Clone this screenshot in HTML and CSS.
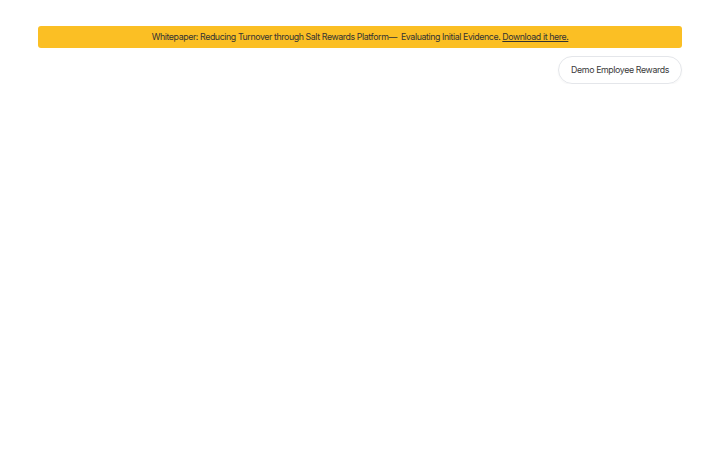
FILE: index.html
```html
<!DOCTYPE html>
<html lang="en">
<head>
    <meta charset="UTF-8">
    <meta name="viewport" content="width=device-width, initial-scale=1.0">
    <title>Salt Rewards</title>
    <link rel="stylesheet" href="styles.css">
</head>
<body>
    <div class="container">
        <div class="banner">
            Whitepaper: Reducing Turnover through Salt Rewards Platform—&nbsp; Evaluating Initial Evidence. <a href="#">Download it here.</a>
        </div>
        <div class="actions">
            <a class="demo-btn" href="#">Demo Employee Rewards</a>
        </div>
    </div>
</body>
</html>
```

FILE: styles.css
```css
body {
    margin: 0;
    padding: 0;
    background-color: #ffffff;
    font-family: Inter, "Open Sans", sans-serif;
    color: #2b2b2b;
}

.container {
    padding: 26px 38px 0 38px;
}

.banner {
    background-color: #fbbf24;
    border-radius: 3px;
    height: 22px;
    line-height: 22px;
    text-align: center;
    font-size: 8.8px;
    letter-spacing: -0.4px;
    color: #333333;
}

.banner a {
    color: #333333;
    text-decoration: underline;
}

.actions {
    display: flex;
    justify-content: flex-end;
    margin-top: 8px;
}

.demo-btn {
    display: inline-block;
    height: 26px;
    line-height: 26px;
    padding: 0 12px;
    border: 1px solid #e4e6ea;
    border-radius: 14px;
    font-size: 8.8px;
    letter-spacing: -0.38px;
    color: #3a3a3a;
    text-decoration: none;
    box-shadow: 0 1px 2px rgba(0, 0, 0, 0.04);
}
```
